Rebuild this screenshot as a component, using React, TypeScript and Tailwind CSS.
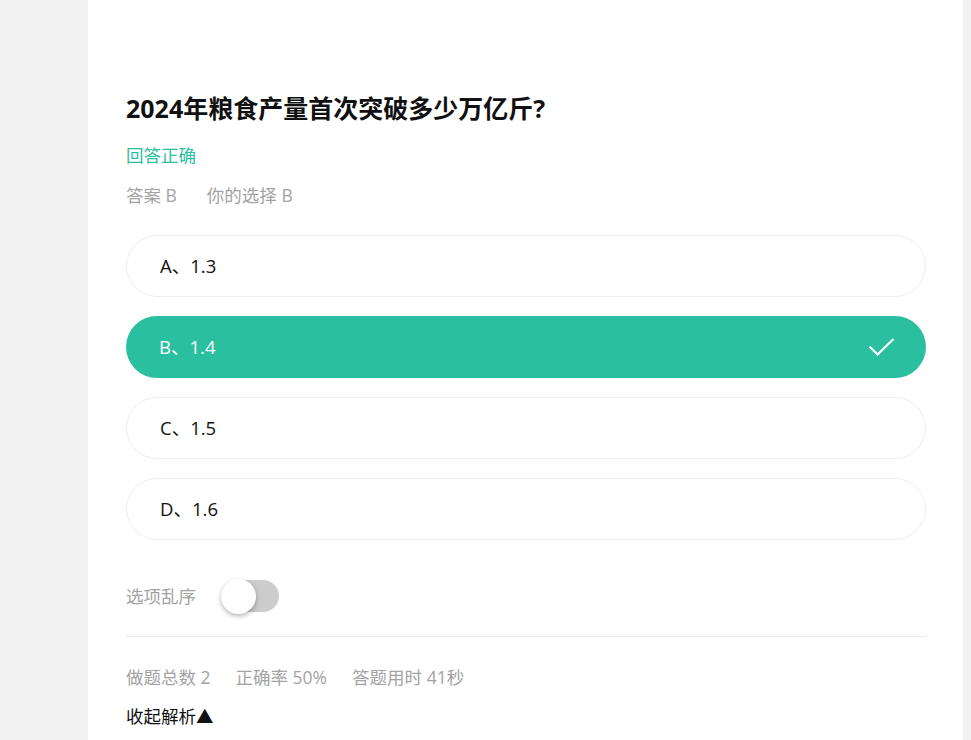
const OPTIONS = [
  { key: 'A', text: '1.3' },
  { key: 'B', text: '1.4' },
  { key: 'C', text: '1.5' },
  { key: 'D', text: '1.6' },
]

const ANSWER = 'B'

function Check() {
  return (
    <svg width="27" height="20" viewBox="0 0 27 20" fill="none">
      <path d="M1.5 9.5 L9.5 17.5 L25.5 2" stroke="white" strokeWidth="2.2" />
    </svg>
  )
}

export default function App() {
  return (
    <div
      className="min-h-[740px] bg-[#f2f2f2] pl-[88px] pr-[8px]"
      style={{ fontFamily: '"Open Sans", "Noto Sans CJK SC", sans-serif' }}
    >
      <div className="bg-white min-h-[740px] pl-[38px] pr-[37px] pt-[88px]">
        <h1 className="text-[25px] leading-[40px] font-bold text-[#111]">
          2024年粮食产量首次突破多少万亿斤?
        </h1>
        <div className="mt-[14px] text-[17.5px] leading-[26px] text-[#2abf9f]">回答正确</div>
        <div className="mt-[14px] flex gap-[30px] text-[17.5px] leading-[26px] text-[#a3a3a3]">
          <span>答案 B</span>
          <span>你的选择 B</span>
        </div>

        <div className="mt-[27px] flex flex-col gap-[19px]">
          {OPTIONS.map((o) => {
            const picked = o.key === ANSWER
            return (
              <div
                key={o.key}
                className={`h-[62px] rounded-full flex items-center justify-between pl-[33px] pr-[31px] text-[18.5px] ${
                  picked ? 'bg-[#2abf9f] text-white' : 'border border-[#ededed] text-[#111]'
                }`}
              >
                <span>{o.key}、{o.text}</span>
                {picked && <Check />}
              </div>
            )
          })}
        </div>

        <div className="mt-[40px] flex items-center gap-[26px]">
          <span className="text-[17.5px] text-[#a3a3a3]">选项乱序</span>
          <div className="relative w-[57px] h-[32px] rounded-full bg-[#cccccc]">
            <div className="absolute left-[-1px] top-[-1.5px] w-[35px] h-[35px] rounded-full bg-white shadow-[0_2px_5px_rgba(0,0,0,0.3)]" />
          </div>
        </div>

        <div className="mt-[24px] border-t border-[#ececec]" />

        <div className="mt-[27px] flex gap-[25px] text-[17.5px] leading-[26px] text-[#a3a3a3]">
          <span>做题总数 2</span>
          <span>正确率 50%</span>
          <span>答题用时 41秒</span>
        </div>
        <div className="mt-[13px] text-[17.5px] leading-[26px] text-[#111]">收起解析▲</div>
      </div>
    </div>
  )
}
